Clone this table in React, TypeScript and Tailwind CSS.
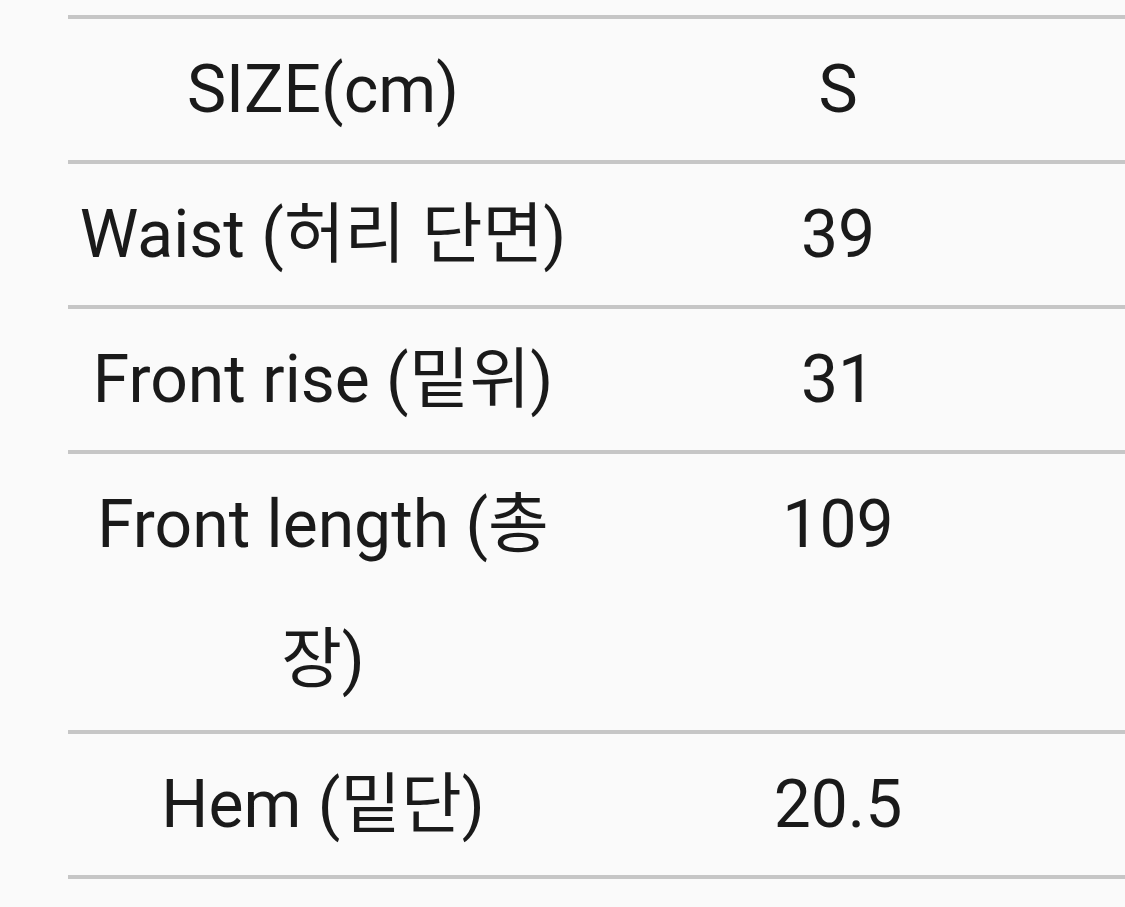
import React from "react";

type Row = { label: string; s: string };

const rows: Row[] = [
  { label: "SIZE(cm)", s: "S" },
  { label: "Waist (허리 단면)", s: "39" },
  { label: "Front rise (밑위)", s: "31" },
  { label: "Front length (총장)", s: "109" },
  { label: "Hem (밑단)", s: "20.5" },
];

// Size chart, cropped on the right like the source capture
const App: React.FC = () => {
  return (
    <div
      className="w-[1125px] h-[907px] overflow-hidden bg-[#fafafa] pt-[15px] pl-[68px] text-[#1a1a1a]"
      style={{ fontFamily: '"Roboto", "Noto Sans CJK KR", sans-serif' }}
    >
      <table className="border-collapse w-[1300px] table-fixed text-[66px] leading-[135px]">
        <colgroup>
          <col className="w-[510px]" />
          <col className="w-[520px]" />
          <col />
        </colgroup>
        <tbody>
          {rows.map((r) => (
            <tr key={r.label} className="border-y-4 border-[#c6c6c6]">
              <td className="px-[4px] py-[3px] text-center align-top">{r.label}</td>
              <td className="px-[4px] py-[3px] text-center align-top">{r.s}</td>
              <td />
            </tr>
          ))}
        </tbody>
      </table>
    </div>
  );
};

export default App;
